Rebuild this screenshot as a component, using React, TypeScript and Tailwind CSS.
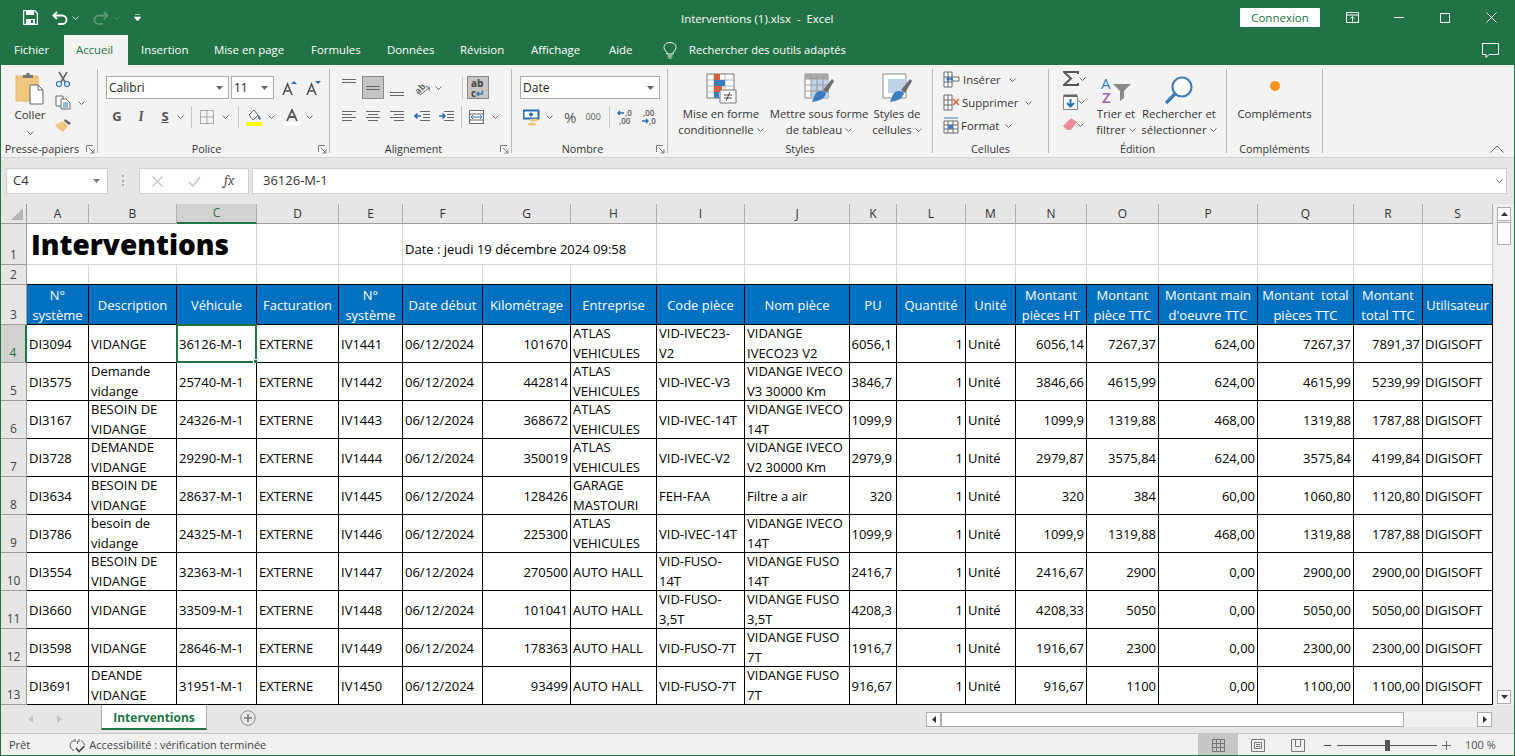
import React from 'react';

const font = "font-['Open_Sans','Noto_Sans',sans-serif]";

const Chev = ({ c = '#666' }: { c?: string }) => (
  <svg width="7" height="4" viewBox="0 0 7 4" className="shrink-0">
    <path d="M0.5 0.5L3.5 3.5L6.5 0.5" fill="none" stroke={c} strokeWidth="1" />
  </svg>
);

const Launcher = () => (
  <svg width="9" height="9" viewBox="0 0 9 9" className="absolute right-[2px] -bottom-[1px]">
    <path d="M0.5 7V0.5H7M3 3L8 8M8 4.5V8H4.5" fill="none" stroke="#777" strokeWidth="1" />
  </svg>
);

const Group = ({ w, label, launcher, children, last }: { w: string; label: string; launcher?: boolean; children?: React.ReactNode; last?: boolean }) => (
  <div className={`${w} shrink-0 h-[84px] mt-[4px] relative flex flex-col ${last ? '' : 'border-r border-[#b8b8b8]'}`}>
    <div className="h-[72px] shrink-0 flex">{children}</div>
    <div className={`h-[16px] shrink-0 text-center text-[10.8px] leading-[16px] text-[#333] whitespace-nowrap ${launcher ? 'pr-[14px]' : ''}`}>{label}</div>
    {launcher && <Launcher />}
  </div>
);

const Lines = ({ d }: { d: string }) => (
  <svg width="16" height="14" viewBox="0 0 16 14" className="shrink-0">
    <path d={d} fill="none" stroke="#666" strokeWidth="1" />
  </svg>
);

const Clipboard = () => (
  <svg width="30" height="33" viewBox="0 0 30 33">
    <path d="M1 4H23V29H1Z" fill="#f0c77f" stroke="#e3b86e" />
    <path d="M8 3H11C11 0 15 0 15 3H18V6H8Z" fill="#777" />
    <path d="M15 13H23L28 18V32H15Z" fill="#fff" stroke="#666" />
    <path d="M23 13V18H28" fill="none" stroke="#666" />
  </svg>
);

const Scissors = () => (
  <svg width="16" height="16" viewBox="0 0 16 16">
    <path d="M4 1L10 11M12 1L6 11" stroke="#666" strokeWidth="1.6" fill="none" />
    <circle cx="4" cy="13" r="2.5" fill="none" stroke="#2b6fb3" strokeWidth="1.2" />
    <circle cx="12" cy="13" r="2.5" fill="none" stroke="#2b6fb3" strokeWidth="1.2" />
  </svg>
);

const CopyIcon = () => (
  <svg width="16" height="15" viewBox="0 0 16 15">
    <path d="M1 1H8V11H1Z" fill="#fff" stroke="#666" />
    <path d="M6 4H11L15 8V14H6Z" fill="#fff" stroke="#666" />
    <path d="M8 8H13M8 10H13M8 12H13" stroke="#2b6fb3" />
  </svg>
);

const Brush = () => (
  <svg width="17" height="15" viewBox="0 0 17 15">
    <path d="M10 1L16 5L14 7L9 3Z" fill="#666" />
    <path d="M8 3L13 8L8 14C5 12 2 10 0 7Z" fill="#f0c77f" />
  </svg>
);

const CfIcon = () => (
  <svg width="31" height="31" viewBox="0 0 31 31">
    <path d="M1 1H28V25H1Z" fill="#fff" stroke="#777" />
    <path d="M1 7H28M1 13H28M1 19H28M8 1V25M19 1V25" stroke="#b5b5b5" />
    <path d="M8 1H14V7H8Z" fill="#d8603c" />
    <path d="M8 7H19V13H8Z" fill="#3b7dbd" />
    <path d="M8 13H16V19H8Z" fill="#d8603c" />
    <path d="M8 19H13V25H8Z" fill="#3b7dbd" />
    <path d="M14 17H30V30H14Z" fill="#fff" stroke="#777" />
    <path d="M18 22H26M18 25H26M24 19L20 28" stroke="#444" fill="none" />
  </svg>
);

const TableStyle = ({ fillAll }: { fillAll?: boolean }) => (
  <svg width="30" height="31" viewBox="0 0 30 31">
    <path d="M1 1H24V25H1Z" fill="#fff" stroke="#888" />
    {fillAll && <path d="M1 1H24V6H1Z" fill="#aaa" />}
    <path d={fillAll ? 'M7 6H24V25H7Z' : 'M6 6H24V20H6Z'} fill="#bfd2e6" />
    {fillAll && <path d="M1 6H24M1 12H24M1 18H24M7 1V25M13 1V25M19 1V25" stroke="#9c9c9c" />}
    <path d="M19 17L28 6L30 8L23 20Z" fill="#6d6d6d" />
    <path d="M10 24C12 17 19 17 22 20C21 26 15 28 8 29Z" fill="#3b7dbd" />
  </svg>
);

const GridIcon = ({ mark }: { mark: 'ins' | 'del' | 'fmt' }) => (
  <svg width="17" height="17" viewBox="0 0 17 17" className="shrink-0">
    {mark === 'fmt' ? (
      <>
        <path d="M1 4H15V16H1ZM1 8H15M1 12H15M5 4V16M10 4V16" fill="#fff" stroke="#666" />
        <path d="M5 8H10V12H5Z" fill="#3b7dbd" />
        <path d="M1 1H15" stroke="#3b7dbd" />
      </>
    ) : (
      <>
        <path d="M1 1H9V16H1ZM1 6H9M1 11H9M5 1V16" fill="#fff" stroke="#666" />
        {mark === 'ins' ? (
          <>
            <path d="M9 6H16V10H9Z" fill="#fff" stroke="#666" />
            <path d="M10 8H4M6 6L4 8L6 10" fill="none" stroke="#2b6fb3" strokeWidth="1.4" />
          </>
        ) : (
          <path d="M10 5L16 11M16 5L10 11" stroke="#d8603c" strokeWidth="1.6" />
        )}
      </>
    )}
  </svg>
);

const rowBtn = 'flex items-center justify-center shrink-0';

const Clip = () => (
  <Group w="w-[97px]" label="Presse-papiers" launcher>
    <div className="ml-[12px] w-[34px] flex flex-col items-center pt-[3px]">
      <Clipboard />
      <div className="text-[11.5px] leading-[16px] mt-[2px] text-[#333]">Coller</div>
      <div className="mt-[8px]"><Chev /></div>
    </div>
    <div className="ml-[8px] flex flex-col pt-[2px] gap-[8px]">
      <Scissors />
      <div className="flex items-center gap-[7px]"><CopyIcon /><Chev /></div>
      <Brush />
    </div>
  </Group>
);

const Box = ({ w, text }: { w: string; text: string }) => (
  <div className={`${w} h-[23px] bg-white border border-[#ababab] flex items-center justify-between pl-[2px] pr-[5px] text-[12px] text-[#222] shrink-0`}>
    <span>{text}</span>
    <svg width="7" height="4" viewBox="0 0 7 4"><path d="M0 0H7L3.5 4Z" fill="#666" /></svg>
  </div>
);

const Vsep = () => <div className="w-px h-[22px] bg-[#c6c6c6] shrink-0" />;

const BigA = ({ up }: { up: boolean }) => (
  <svg width="16" height="16" viewBox="0 0 16 16" className="shrink-0">
    <path d={up ? 'M9 4L12 1L15 4Z' : 'M9 1H15L12 4Z'} fill="#2b6fb3" />
    <path d="M1 15L5.5 4L10 15M2.8 11H8.2" fill="none" stroke="#555" strokeWidth="1.6" />
  </svg>
);

const Police = () => (
  <Group w="w-[232px]" label="Police" launcher>
    <div className="ml-[8px] flex flex-col pt-[7px]">
      <div className="flex items-center">
        <Box w="w-[123px]" text="Calibri" />
        <div className="w-[2px]" />
        <Box w="w-[43px]" text="11" />
        <div className="ml-[8px]"><BigA up /></div>
        <div className="ml-[8px]"><BigA up={false} /></div>
      </div>
      <div className="flex items-center h-[22px] mt-[7px] text-[13px] text-[#555]">
        <span className="w-[20px] ml-[1px] text-center font-bold">G</span>
        <span className="w-[22px] ml-[3px] text-center italic font-serif font-bold">I</span>
        <span className="w-[20px] ml-[3px] text-center font-bold underline">S</span>
        <span className="ml-[2px]"><Chev /></span>
        <div className="ml-[7px]"><Vsep /></div>
        <svg width="14" height="14" viewBox="0 0 14 14" className="ml-[8px]">
          <path d="M.5.5H13.5V13.5H.5ZM7 .5V13.5M.5 7H13.5" fill="none" stroke="#666" strokeDasharray="1 1" />
        </svg>
        <span className="ml-[8px]"><Chev /></span>
        <div className="ml-[9px]"><Vsep /></div>
        <svg width="16" height="17" viewBox="0 0 16 17" className="ml-[7px]">
          <path d="M3 6L8 1L12 6L7 11Z" fill="#fff" stroke="#666" />
          <path d="M12 6C15 8 15 10 14 11C12 10 12 8 12 6Z" fill="#2b6fb3" />
          <path d="M0 13H16V17H0Z" fill="#ffff00" />
        </svg>
        <span className="ml-[6px]"><Chev /></span>
        <svg width="16" height="17" viewBox="0 0 16 17" className="ml-[9px]">
          <path d="M3 12L8 1L13 12M5 8H11" fill="none" stroke="#555" strokeWidth="1.8" />
          <path d="M0 13H16V17H0Z" fill="#fff" />
        </svg>
        <span className="ml-[6px]"><Chev /></span>
      </div>
    </div>
  </Group>
);

const Align = () => (
  <Group w="w-[182px]" label="Alignement" launcher>
    <div className="ml-[12px] flex flex-col pt-[7px]">
      <div className="flex items-center h-[23px]">
        <div className="w-[14px] mb-[8px]"><Lines d="M0 2.5H14M0 5.5H14" /></div>
        <div className="ml-[6px] w-[22px] h-[23px] bg-[#c5c5c5] border border-[#8a8a8a] flex items-center justify-center">
          <Lines d="M1 5.5H15M1 8.5H15" />
        </div>
        <div className="ml-[6px] w-[14px] mt-[8px]"><Lines d="M0 7.5H14M0 10.5H14" /></div>
        <svg width="17" height="16" viewBox="0 0 17 16" className="ml-[10px] overflow-visible">
          <text x="1" y="13" fontSize="9" fontWeight="700" fill="#666" fontFamily="Open Sans" transform="rotate(-45 5 10)">ab</text>
          <path d="M6 15L15 8M12 6.5L15.5 7.5L15 11" fill="none" stroke="#666" />
        </svg>
        <span className="ml-[4px]"><Chev /></span>
        <div className="ml-[20px]"><Vsep /></div>
        <div className="ml-[4px] w-[22px] h-[23px] bg-[#c5c5c5] border border-[#8a8a8a] text-[10px] leading-[10px] font-bold text-[#444] pt-px pl-[3px]">
          <div>ab</div>
          <div>c<span className="text-[#2b6fb3]">↵</span></div>
        </div>
      </div>
      <div className="flex items-center h-[22px] mt-[7px]">
        <Lines d="M0 1.5H14M0 4.5H10M0 7.5H14M0 10.5H10" />
        <div className="ml-[8px]"><Lines d="M0 1.5H14M2 4.5H12M0 7.5H14M2 10.5H12" /></div>
        <div className="ml-[8px]"><Lines d="M0 1.5H14M4 4.5H14M0 7.5H14M4 10.5H14" /></div>
        <svg width="16" height="14" viewBox="0 0 16 14" className="ml-[8px]">
          <path d="M6 1.5H16M9 4.5H16M9 7.5H16M6 10.5H16" stroke="#666" />
          <path d="M7 6H1M3.5 3.5L1 6L3.5 8.5" fill="none" stroke="#2b6fb3" strokeWidth="1.6" />
        </svg>
        <svg width="16" height="14" viewBox="0 0 16 14" className="ml-[8px]">
          <path d="M6 1.5H16M9 4.5H16M9 7.5H16M6 10.5H16" stroke="#666" />
          <path d="M1 6H7M4.5 3.5L7 6L4.5 8.5" fill="none" stroke="#2b6fb3" strokeWidth="1.6" />
        </svg>
        <div className="ml-[7px]"><Vsep /></div>
        <svg width="15" height="14" viewBox="0 0 15 14" className="ml-[7px]">
          <path d="M.5.5H14.5V13.5H.5ZM.5 4H14.5M.5 10H14.5" fill="#fff" stroke="#666" />
          <path d="M2 7H13M4 5L2 7L4 9M11 5L13 7L11 9" fill="none" stroke="#2b6fb3" />
        </svg>
        <span className="ml-[8px]"><Chev /></span>
      </div>
    </div>
  </Group>
);

const Nombre = () => (
  <Group w="w-[156px]" label="Nombre" launcher>
    <div className="ml-[8px] flex flex-col pt-[7px]">
      <Box w="w-[140px]" text="Date" />
      <div className="flex items-center h-[22px] mt-[7px]">
        <svg width="17" height="17" viewBox="0 0 17 17" className="ml-[3px]">
          <path d="M.5 1.5H15.5V9.5H.5Z" fill="#fff" stroke="#2b6fb3" strokeWidth="2" />
          <circle cx="8" cy="5.5" r="2" fill="#2b6fb3" />
          <ellipse cx="11" cy="11" rx="4" ry="1.5" fill="#f0c77f" />
          <ellipse cx="9" cy="15" rx="4" ry="1.5" fill="#f0c77f" />
        </svg>
        <span className="ml-[6px]"><Chev /></span>
        <span className="ml-[11px] text-[15px] leading-none text-[#555]">%</span>
        <span className="ml-[9px] text-[9px] text-[#555]">000</span>
        <div className="ml-[8px]"><Vsep /></div>
        <svg width="16" height="16" viewBox="0 0 16 16" className="ml-[7px] overflow-visible">
          <path d="M7 4H1M3 2L1 4L3 6" fill="none" stroke="#2b6fb3" strokeWidth="1.4" />
          <text x="8" y="7" fontSize="8" fontWeight="600" fill="#555" fontFamily="Open Sans">,0</text>
          <text x="2" y="15" fontSize="8" fontWeight="600" fill="#555" fontFamily="Open Sans">,00</text>
        </svg>
        <svg width="16" height="16" viewBox="0 0 16 16" className="ml-[8px] overflow-visible">
          <text x="2" y="7" fontSize="8" fontWeight="600" fill="#555" fontFamily="Open Sans">,00</text>
          <path d="M1 12H7M5 10L7 12L5 14" fill="none" stroke="#2b6fb3" strokeWidth="1.4" />
          <text x="8" y="15" fontSize="8" fontWeight="600" fill="#555" fontFamily="Open Sans">,0</text>
        </svg>
      </div>
    </div>
  </Group>
);

const BigBtn = ({ w, icon, a, b, ml }: { w: string; icon: React.ReactNode; a: string; b: string; ml?: string }) => (
  <div className={`${w} ${ml ?? ''} flex flex-col items-center shrink-0 whitespace-nowrap`}>
    <div className="h-[31px] mt-[4px] flex items-end">{icon}</div>
    <div className="text-[11.4px] leading-[16px] mt-[2px] text-[#333]">{a}</div>
    <div className="text-[11.4px] leading-[16px] text-[#333] flex items-center gap-[3px]">
      {b}<Chev />
    </div>
  </div>
);

const Styles = () => (
  <Group w="w-[265px]" label="Styles">
    <BigBtn w="w-[104px]" ml="ml-[1px]" icon={<CfIcon />} a="Mise en forme" b="conditionnelle" />
    <BigBtn w="w-[92px]" icon={<TableStyle fillAll />} a="Mettre sous forme" b="de tableau" />
    <BigBtn w="w-[64px]" icon={<TableStyle />} a="Styles de" b="cellules" />
  </Group>
);

const Cellules = () => (
  <Group w="w-[116px]" label="Cellules">
    <div className="ml-[10px] -mt-px flex flex-col text-[11.4px] text-[#333]">
      {[
        { m: 'ins' as const, t: 'Insérer', g: 'gap-[8px]' },
        { m: 'del' as const, t: 'Supprimer', g: 'gap-[7px]' },
        { m: 'fmt' as const, t: 'Format', g: 'gap-[6px]' },
      ].map((r) => (
        <div key={r.t} className={`h-[23px] flex items-center ${r.g}`}>
          <GridIcon mark={r.m} />
          <span className="-ml-[5px]">{r.t}</span>
          <Chev />
        </div>
      ))}
    </div>
  </Group>
);

const Edition = () => (
  <Group w="w-[178px]" label="Édition">
    <div className="ml-[11px] w-[34px] flex flex-col pt-[2px] gap-[8px]">
      <div className={`${rowBtn} justify-between h-[15px]`}>
        <svg width="16" height="15" viewBox="0 0 16 15"><path d="M15 3V1H1L8 7.5L1 14H15V12" fill="none" stroke="#555" strokeWidth="2" /></svg>
        <span className="mr-[5px]"><Chev /></span>
      </div>
      <div className={`${rowBtn} justify-between h-[16px]`}>
        <svg width="15" height="16" viewBox="0 0 15 16">
          <path d="M.5 2.5H14.5V15.5H.5Z" fill="#fff" stroke="#888" />
          <path d="M.5 .5H14.5V3H.5Z" fill="#666" />
          <path d="M7.5 5V12M4 9L7.5 12.5L11 9" fill="none" stroke="#2b6fb3" strokeWidth="2" />
        </svg>
        <span className="mr-[7px]"><Chev /></span>
      </div>
      <div className={`${rowBtn} justify-between h-[13px]`}>
        <svg width="14" height="13" viewBox="0 0 14 13">
          <path d="M8 0L14 4L8 12H4L0 8Z" fill="#ec8c98" />
        </svg>
        <span className="mr-[7px]"><Chev /></span>
      </div>
    </div>
    <BigBtn
      w="w-[56px]"
      ml="ml-[-6px]"
      icon={
        <svg width="30" height="28" viewBox="0 0 30 28" className="overflow-visible">
          <text x="0" y="13" fontSize="15" fill="#3b7dbd" fontFamily="Open Sans">A</text>
          <text x="1" y="27" fontSize="15" fontWeight="600" fill="#9b5fb5" fontFamily="Open Sans">Z</text>
          <path d="M12 8H30L23 15V22L19 25V15Z" fill="#8a8a8a" />
        </svg>
      }
      a="Trier et"
      b="filtrer"
    />
    <BigBtn
      w="w-[70px]"
      icon={
        <svg width="28" height="28" viewBox="0 0 28 28">
          <circle cx="17" cy="11" r="9.5" fill="#fff" stroke="#3f7cb8" strokeWidth="2.2" />
          <path d="M10 18L2 26" stroke="#3f7cb8" strokeWidth="3.4" strokeLinecap="round" />
        </svg>
      }
      a="Rechercher et"
      b="sélectionner"
    />
  </Group>
);

const Complements = () => (
  <Group w="w-[96px]" label="Compléments">
    <div className="w-full flex flex-col items-center">
      <div className="mt-[12px] w-[10px] h-[10px] rounded-full bg-[#f7931e]" />
      <div className="text-[11.4px] leading-[16px] mt-[15px] text-[#333]">Compléments</div>
    </div>
  </Group>
);

const tabs = [
  { t: 'Fichier', w: 'w-[63px]' },
  { t: 'Accueil', w: 'w-[64px]', on: true },
  { t: 'Insertion', w: 'w-[73px]' },
  { t: 'Mise en page', w: 'w-[97px]' },
  { t: 'Formules', w: 'w-[76px]' },
  { t: 'Données', w: 'w-[73px]' },
  { t: 'Révision', w: 'w-[71px]' },
  { t: 'Affichage', w: 'w-[78px]' },
  { t: 'Aide', w: 'w-[54px]' },
];

const TitleBar = () => (
  <div className="h-[35px] bg-[#217346] flex items-center text-white relative shrink-0">
    <svg width="15" height="15" viewBox="0 0 15 15" className="ml-[22px]">
      <path d="M.5.5H11.5L14.5 3.5V14.5H.5Z" fill="none" stroke="#fff" strokeWidth="1.4" />
      <path d="M3 1H11V5H3ZM3 9H12V14H3Z" fill="#fff" />
      <path d="M8 10H10V13H8Z" fill="#217346" />
    </svg>
    <svg width="16" height="14" viewBox="0 0 16 14" className="ml-[14px]">
      <path d="M5 1L1.5 4.5L5 8M2 4.5H10C16 4.5 16 13 10 13H6" fill="none" stroke="#fff" strokeWidth="1.8" />
    </svg>
    <span className="ml-[4px]"><Chev c="#cfe0d6" /></span>
    <svg width="16" height="14" viewBox="0 0 16 14" className="ml-[14px]">
      <path d="M11 1L14.5 4.5L11 8M14 4.5H6C0 4.5 0 13 6 13H10" fill="none" stroke="#5b9476" strokeWidth="1.8" />
    </svg>
    <span className="ml-[4px]"><Chev c="#5b9476" /></span>
    <svg width="7" height="8" viewBox="0 0 7 8" className="ml-[14px]">
      <path d="M1 .5H6M0 3H7L3.5 7Z" fill="#fff" stroke="#fff" strokeWidth=".6" />
    </svg>
    <div className="absolute left-[680px] top-[10px] text-[11.4px] leading-[17px] whitespace-pre">Interventions (1).xlsx  -  Excel</div>
    <div className="ml-auto flex items-center">
      <div className="w-[80px] h-[19px] bg-white text-[#217346] text-[11.5px] leading-[19px] text-center rounded-[1px]">Connexion</div>
      <svg width="13" height="11" viewBox="0 0 13 11" className="ml-[26px]">
        <path d="M.5.5H12.5V10.5H.5ZM.5 3H12.5M6.5 9.5V4.5M4.5 6.5L6.5 4.5L8.5 6.5" fill="none" stroke="#fff" />
      </svg>
      <div className="ml-[35px] w-[10px] h-px bg-white" />
      <div className="ml-[36px] w-[10px] h-[10px] border border-white" />
      <svg width="11" height="11" viewBox="0 0 11 11" className="ml-[36px] mr-[17px]">
        <path d="M.5.5L10.5 10.5M10.5.5L.5 10.5" stroke="#fff" />
      </svg>
    </div>
  </div>
);

const TabBar = () => (
  <div className="h-[30px] bg-[#217346] flex text-[11.4px] text-white shrink-0 items-stretch">
    {tabs.map((t) => (
      <div
        key={t.t}
        className={`${t.w} ${t.on ? 'bg-[#f3f3f3] text-[#217346] pl-[12px]' : 'pl-[13px]'} leading-[30px] whitespace-nowrap shrink-0`}
      >
        {t.t}
      </div>
    ))}
    <svg width="14" height="17" viewBox="0 0 14 17" className="self-center ml-[13px]">
      <path d="M4 12C4 9 1 8.5 1 5.5C1 2.5 3.5.5 7 .5C10.5.5 13 2.5 13 5.5C13 8.5 10 9 10 12ZM4.5 14H9.5M5.5 16H8.5" fill="none" stroke="#fff" />
    </svg>
    <div className="ml-[12px] leading-[30px] text-[11.2px]">Rechercher des outils adaptés</div>
    <svg width="17" height="15" viewBox="0 0 17 15" className="self-center ml-auto mr-[15px]">
      <path d="M.5.5H16.5V11.5H7L4 14.5V11.5H.5Z" fill="none" stroke="#fff" />
    </svg>
  </div>
);

const Ribbon = () => (
  <div className="h-[93px] bg-[#f3f3f3] border-b border-[#d2d2d2] flex relative shrink-0">
    <Clip />
    <Police />
    <Align />
    <Nombre />
    <Styles />
    <Cellules />
    <Edition />
    <Complements />
    <svg width="14" height="8" viewBox="0 0 14 8" className="absolute right-[10px] bottom-[4px]">
      <path d="M.5 7.5L7 1L13.5 7.5" fill="none" stroke="#666" />
    </svg>
  </div>
);

const FormulaBar = () => (
  <div className="h-[46px] bg-[#e6e6e6] flex pt-[10px] shrink-0">
    <div className="ml-[5px] w-[102px] h-[26px] bg-white border border-[#d0d0d0] flex items-center justify-between pl-[6px] pr-[7px] text-[13px] text-[#333]">
      <span>C4</span>
      <svg width="7" height="4" viewBox="0 0 7 4"><path d="M0 0H7L3.5 4Z" fill="#777" /></svg>
    </div>
    <div className="ml-[14px] w-[2px] h-[11px] mt-[7px] border-l-2 border-dotted border-[#aaa]" />
    <div className="ml-[15px] w-[110px] h-[26px] bg-white border border-[#d0d0d0] flex items-center pl-[12px]">
      <svg width="11" height="11" viewBox="0 0 11 11"><path d="M.5.5L10.5 10.5M10.5.5L.5 10.5" stroke="#c6c6c6" strokeWidth="1.4" /></svg>
      <svg width="13" height="11" viewBox="0 0 13 11" className="ml-[25px]"><path d="M1 6L5 10L12 1" fill="none" stroke="#c6c6c6" strokeWidth="1.6" /></svg>
      <span className="ml-[23px] font-serif italic text-[14px] text-[#555] leading-none">fx</span>
    </div>
    <div className="ml-[3px] flex-1 mr-[7px] h-[26px] bg-white border border-[#d0d0d0] flex items-center justify-between pl-[10px] pr-[3px] text-[13px] text-[#333]">
      <span>36126-M-1</span>
      <Chev />
    </div>
  </div>
);

const colWidths = [62, 88, 80, 82, 64, 80, 88, 86, 88, 105, 47, 69, 50, 71, 72, 99, 96, 69, 70];
const letters = 'ABCDEFGHIJKLMNOPQRS'.split('');
const headers = [
  'N°\nsystème', 'Description', 'Véhicule', 'Facturation', 'N°\nsystème', 'Date début', 'Kilométrage', 'Entreprise', 'Code pièce', 'Nom pièce', 'PU', 'Quantité', 'Unité',
  'Montant\npièces HT', 'Montant\npièce TTC', 'Montant main\nd\'oeuvre TTC', 'Montant  total\npièces TTC', 'Montant\ntotal TTC', 'Utilisateur',
];

const rows: string[][] = [
  ['DI3094', 'VIDANGE', '36126-M-1', 'EXTERNE', 'IV1441', '06/12/2024', '101670', 'ATLAS\nVEHICULES', 'VID-IVEC23-\nV2', 'VIDANGE\nIVECO23 V2', '6056,1', '1', 'Unité', '6056,14', '7267,37', '624,00', '7267,37', '7891,37', 'DIGISOFT'],
  ['DI3575', 'Demande\nvidange', '25740-M-1', 'EXTERNE', 'IV1442', '06/12/2024', '442814', 'ATLAS\nVEHICULES', 'VID-IVEC-V3', 'VIDANGE IVECO\nV3 30000 Km', '3846,7', '1', 'Unité', '3846,66', '4615,99', '624,00', '4615,99', '5239,99', 'DIGISOFT'],
  ['DI3167', 'BESOIN DE\nVIDANGE', '24326-M-1', 'EXTERNE', 'IV1443', '06/12/2024', '368672', 'ATLAS\nVEHICULES', 'VID-IVEC-14T', 'VIDANGE IVECO\n14T', '1099,9', '1', 'Unité', '1099,9', '1319,88', '468,00', '1319,88', '1787,88', 'DIGISOFT'],
  ['DI3728', 'DEMANDE\nVIDANGE', '29290-M-1', 'EXTERNE', 'IV1444', '06/12/2024', '350019', 'ATLAS\nVEHICULES', 'VID-IVEC-V2', 'VIDANGE IVECO\nV2 30000 Km', '2979,9', '1', 'Unité', '2979,87', '3575,84', '624,00', '3575,84', '4199,84', 'DIGISOFT'],
  ['DI3634', 'BESOIN DE\nVIDANGE', '28637-M-1', 'EXTERNE', 'IV1445', '06/12/2024', '128426', 'GARAGE\nMASTOURI', 'FEH-FAA', 'Filtre a air', '320', '1', 'Unité', '320', '384', '60,00', '1060,80', '1120,80', 'DIGISOFT'],
  ['DI3786', 'besoin de\nvidange', '24325-M-1', 'EXTERNE', 'IV1446', '06/12/2024', '225300', 'ATLAS\nVEHICULES', 'VID-IVEC-14T', 'VIDANGE IVECO\n14T', '1099,9', '1', 'Unité', '1099,9', '1319,88', '468,00', '1319,88', '1787,88', 'DIGISOFT'],
  ['DI3554', 'BESOIN DE\nVIDANGE', '32363-M-1', 'EXTERNE', 'IV1447', '06/12/2024', '270500', 'AUTO HALL', 'VID-FUSO-\n14T', 'VIDANGE FUSO\n14T', '2416,7', '1', 'Unité', '2416,67', '2900', '0,00', '2900,00', '2900,00', 'DIGISOFT'],
  ['DI3660', 'VIDANGE', '33509-M-1', 'EXTERNE', 'IV1448', '06/12/2024', '101041', 'AUTO HALL', 'VID-FUSO-\n3,5T', 'VIDANGE FUSO\n3,5T', '4208,3', '1', 'Unité', '4208,33', '5050', '0,00', '5050,00', '5050,00', 'DIGISOFT'],
  ['DI3598', 'VIDANGE', '28646-M-1', 'EXTERNE', 'IV1449', '06/12/2024', '178363', 'AUTO HALL', 'VID-FUSO-7T', 'VIDANGE FUSO\n7T', '1916,7', '1', 'Unité', '1916,67', '2300', '0,00', '2300,00', '2300,00', 'DIGISOFT'],
  ['DI3691', 'DEANDE\nVIDANGE', '31951-M-1', 'EXTERNE', 'IV1450', '06/12/2024', '93499', 'AUTO HALL', 'VID-FUSO-7T', 'VIDANGE FUSO\n7T', '916,67', '1', 'Unité', '916,67', '1100', '0,00', '1100,00', '1100,00', 'DIGISOFT'],
];

const rightCols = new Set([6, 10, 11, 13, 14, 15, 16, 17]);

const RowHead = ({ n, h, on }: { n: number; h: string; on?: boolean }) => (
  <div className={`${h} flex items-end justify-center text-[12px] leading-[18px] border-b border-r ${on ? 'bg-[#d2d2d2] text-[#217346] border-r-[#217346] border-r-2 border-b-[#9e9e9e]' : 'bg-[#e6e6e6] text-[#444] border-[#9e9e9e]'}`}>
    {n}
  </div>
);

const Sheet = () => (
  <div className="h-[501px] flex bg-[#e6e6e6] shrink-0 overflow-hidden">
    <div className="w-[1493px] shrink-0 grid grid-cols-[26px_62px_88px_80px_82px_64px_80px_88px_86px_88px_105px_47px_69px_50px_71px_72px_99px_96px_69px_70px] grid-rows-[20px_41px_20px_40px_repeat(10,38px)] content-start">
      <div className="border-r border-b border-[#9e9e9e] relative">
        <svg width="12" height="12" viewBox="0 0 12 12" className="absolute right-[3px] bottom-[3px]"><path d="M12 0V12H0Z" fill="#b5b5b5" /></svg>
      </div>
      {letters.map((l, i) => (
        <div
          key={l}
          className={`flex items-center justify-center text-[12px] border-r border-[#b0b0b0] ${i === 2 ? 'bg-[#d2d2d2] text-[#217346] border-b-2 border-b-[#217346]' : 'bg-[#e6e6e6] text-[#333] border-b border-b-[#9e9e9e]'}`}
        >
          {l}
        </div>
      ))}

      <RowHead n={1} h="h-[41px]" />
      <div className="col-span-3 bg-white border-r border-b border-[#d4d4d4] pl-[4px] text-[28px] leading-[40px] font-extrabold text-black whitespace-nowrap">Interventions</div>
      <div className="bg-white border-r border-b border-[#d4d4d4]" />
      <div className="bg-white border-r border-b border-[#d4d4d4]" />
      <div className="col-span-3 bg-white border-r border-b border-[#d4d4d4] pl-[2px] pt-[15px] text-[13px] leading-[20px] text-black whitespace-nowrap">Date : jeudi 19 décembre 2024 09:58</div>
      {colWidths.slice(8).map((_, i) => (
        <div key={i} className="bg-white border-r border-b border-[#d4d4d4]" />
      ))}

      <RowHead n={2} h="h-[20px]" />
      {colWidths.map((_, i) => (
        <div key={i} className="bg-white border-r border-b border-[#d4d4d4]" />
      ))}

      <RowHead n={3} h="h-[40px]" />
      {headers.map((h, i) => (
        <div key={i} className="bg-[#0070c0] text-white text-[13px] leading-[20px] text-center whitespace-pre border-r border-b border-black border-t -mt-px flex items-center justify-center overflow-hidden">
          {h}
        </div>
      ))}

      {rows.map((row, ri) => (
        <React.Fragment key={ri}>
          <RowHead n={ri + 4} h="h-[38px]" on={ri === 0} />
          {row.map((c, ci) => (
            <div
              key={ci}
              className={`relative bg-white text-black text-[13px] leading-[20px] whitespace-pre border-r border-b border-black flex items-center ${rightCols.has(ci) ? 'justify-end pr-[2px]' : 'pl-[2px]'} ${ci === 10 ? 'pr-[4px]' : ''}`}
            >
              <span className={`block ${c.includes('\n') ? '-mt-px' : ''}`}>{c}</span>
              {ri === 0 && ci === 2 && (
                <div className="absolute -left-px -top-px -right-[1px] -bottom-[1px] border-2 border-[#217346]">
                  <div className="absolute -right-[3px] -bottom-[3px] w-[5px] h-[5px] bg-[#217346] border border-white" />
                </div>
              )}
            </div>
          ))}
        </React.Fragment>
      ))}
    </div>
    <div className="flex-1 bg-[#f0f0f0] flex flex-col items-center pt-[3px]">
      <div className="w-[14px] h-[14px] bg-white border border-[#ababab] flex items-center justify-center">
        <svg width="7" height="4" viewBox="0 0 7 4"><path d="M0 4H7L3.5 0Z" fill="#333" /></svg>
      </div>
      <div className="mt-[1px] w-[14px] h-[23px] bg-white border border-[#ababab]" />
      <div className="mt-auto mb-[1px] w-[14px] h-[14px] bg-white border border-[#ababab] flex items-center justify-center">
        <svg width="7" height="4" viewBox="0 0 7 4"><path d="M0 0H7L3.5 4Z" fill="#333" /></svg>
      </div>
    </div>
  </div>
);

const SheetBar = () => (
  <div className="h-[29px] bg-[#e6e6e6] border-b border-[#c6c6c6] flex shrink-0">
    <svg width="6" height="8" viewBox="0 0 6 8" className="ml-[27px] mt-[10px]"><path d="M5 0V8L0 4Z" fill="#c4c4c4" /></svg>
    <svg width="6" height="8" viewBox="0 0 6 8" className="ml-[23px] mt-[10px]"><path d="M0 0V8L5 4Z" fill="#c4c4c4" /></svg>
    <div className="ml-[38px] w-[106px] h-[25px] bg-white border-x border-[#ababab] border-b-2 border-b-[#217346] text-center text-[12px] leading-[25px] font-bold text-[#217346]">Interventions</div>
    <svg width="16" height="16" viewBox="0 0 16 16" className="ml-[33px] mt-[5px]">
      <circle cx="8" cy="8" r="7.3" fill="none" stroke="#8a8a8a" />
      <path d="M4 8H12M8 4V12" stroke="#777" strokeWidth="1.6" />
    </svg>
    <div className="ml-[670px] mt-[7px] w-[566px] h-[15px] flex bg-[#f0f0f0]">
      <div className="w-[15px] h-[15px] bg-white border border-[#ababab] flex items-center justify-center">
        <svg width="4" height="7" viewBox="0 0 4 7"><path d="M4 0V7L0 3.5Z" fill="#333" /></svg>
      </div>
      <div className="w-[463px] h-[15px] bg-white border border-[#ababab]" />
      <div className="ml-auto w-[15px] h-[15px] bg-white border border-[#ababab] flex items-center justify-center">
        <svg width="4" height="7" viewBox="0 0 4 7"><path d="M0 0V7L4 3.5Z" fill="#333" /></svg>
      </div>
    </div>
  </div>
);

const StatusBar = () => (
  <div className="flex-1 bg-[#f0f0f0] flex items-center text-[11px] text-[#444]">
    <span className="ml-[8px]">Prêt</span>
    <svg width="17" height="15" viewBox="0 0 17 15" className="ml-[39px]">
      <path d="M5 2.5C2 3.5 .5 6 1.5 9C2.2 11 3.5 12 5 12.5M12 2.5C14 3.5 15 5 15.5 7M6 1V4M10 1V4M8.5 3V6" fill="none" stroke="#555" />
      <path d="M7 10L10 13.5L15.5 8" fill="none" stroke="#444" strokeWidth="1.6" />
    </svg>
    <span className="ml-[3px]">Accessibilité : vérification terminée</span>
    <div className="ml-auto flex items-center">
      <div className="w-[40px] h-[22px] bg-[#c6c6c6] flex items-center justify-center">
        <svg width="13" height="13" viewBox="0 0 13 13"><path d="M.5.5H12.5V12.5H.5ZM.5 4.5H12.5M.5 8.5H12.5M4.5.5V12.5M8.5.5V12.5" fill="none" stroke="#777" /></svg>
      </div>
      <svg width="14" height="13" viewBox="0 0 14 13" className="ml-[13px]"><path d="M.5.5H13.5V12.5H.5ZM3.5 3.5H10.5V9.5H3.5ZM5 5.5H9M5 7.5H9" fill="none" stroke="#777" /></svg>
      <svg width="14" height="13" viewBox="0 0 14 13" className="ml-[26px]"><path d="M.5.5H13.5V12.5H.5ZM4.5.5V7.5H9.5V.5" fill="none" stroke="#777" /></svg>
      <div className="ml-[19px] w-[7px] h-px bg-[#444]" />
      <div className="ml-[6px] w-[100px] h-px bg-[#555] relative">
        <div className="absolute left-[48px] -top-[5px] w-[5px] h-[11px] bg-[#555]" />
      </div>
      <svg width="9" height="9" viewBox="0 0 9 9" className="ml-[5px]"><path d="M0 4.5H9M4.5 0V9" stroke="#666" /></svg>
      <span className="ml-[14px] mr-[19px] w-[30px] text-[#555] whitespace-pre">100 %</span>
    </div>
  </div>
);

export default function App() {
  return (
    <div className={`w-[1515px] h-[756px] overflow-hidden flex flex-col bg-[#217346] ${font} border-x border-b border-[#217346]`}>
      <TitleBar />
      <TabBar />
      <Ribbon />
      <FormulaBar />
      <Sheet />
      <SheetBar />
      <StatusBar />
    </div>
  );
}
